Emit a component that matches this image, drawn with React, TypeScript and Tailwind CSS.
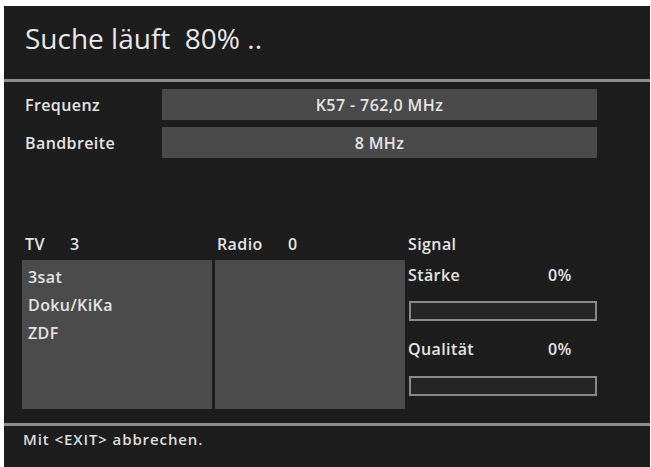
import React from "react";

const font = { fontFamily: '"Open Sans", "Noto Sans", "DejaVu Sans", sans-serif' };

function SignalBar() {
  return <div className="h-[20px] w-[188px] border-2 border-[#8a8a8a] bg-[#252525]" />;
}

export default function App() {
  return (
    <div className="w-[651px] h-[467px] bg-white pt-[6px] pl-[4px] pr-[1px]" style={font}>
      <div className="h-full bg-[#1d1d1d] flex flex-col text-[#e4e4e4]">
        <div className="h-[73px] pl-[21px] pt-[14px] text-[28px] leading-[36px] text-[#e8e8e8]">
          Suche läuft&nbsp; 80% ..
        </div>
        <div className="h-[3px] bg-[#8e8e8e]" />
        <div className="pt-[7px] flex flex-col gap-[7px] text-[16px] font-semibold tracking-[0.4px]">
          <div className="flex items-center h-[31px]">
            <div className="w-[158px] pl-[21px]">Frequenz</div>
            <div className="w-[435px] h-full bg-[#4a4a4a] flex items-center justify-center">K57 - 762,0 MHz</div>
          </div>
          <div className="flex items-center h-[31px]">
            <div className="w-[158px] pl-[21px]">Bandbreite</div>
            <div className="w-[435px] h-full bg-[#4a4a4a] flex items-center justify-center">8 MHz</div>
          </div>
        </div>
        <div className="mt-[76px] flex pl-[18px] gap-[3px] text-[16px] font-semibold tracking-[0.4px] leading-[20px]">
          <div className="w-[190px] flex flex-col">
            <div className="h-[20px] pl-[3px] flex">
              <span className="w-[45px]">TV</span>
              <span>3</span>
            </div>
            <div className="mt-[6px] h-[149px] bg-[#4b4b4b] pl-[6px] pt-[3px] leading-[28px]">
              <div>3sat</div>
              <div>Doku/KiKa</div>
              <div>ZDF</div>
            </div>
          </div>
          <div className="w-[190px] flex flex-col">
            <div className="h-[20px] pl-[2px] flex">
              <span className="w-[71px]">Radio</span>
              <span>0</span>
            </div>
            <div className="mt-[6px] h-[149px] bg-[#4b4b4b]" />
          </div>
          <div className="w-[189px] flex flex-col">
            <div className="h-[20px]">Signal</div>
            <div className="mt-[11px] h-[20px] flex">
              <span className="w-[140px]">Stärke</span>
              <span>0%</span>
            </div>
            <div className="mt-[16px] pl-[1px]">
              <SignalBar />
            </div>
            <div className="mt-[18px] h-[20px] flex">
              <span className="w-[140px]">Qualität</span>
              <span>0%</span>
            </div>
            <div className="mt-[17px] pl-[1px]">
              <SignalBar />
            </div>
          </div>
        </div>
        <div className="mt-[14px] h-[3px] bg-[#8e8e8e]" />
        <div className="pt-[3px] pl-[19px] text-[15px] leading-[20px] font-semibold tracking-[0.9px] text-[#dedede]">
          Mit &lt;EXIT&gt; abbrechen.
        </div>
      </div>
    </div>
  );
}
